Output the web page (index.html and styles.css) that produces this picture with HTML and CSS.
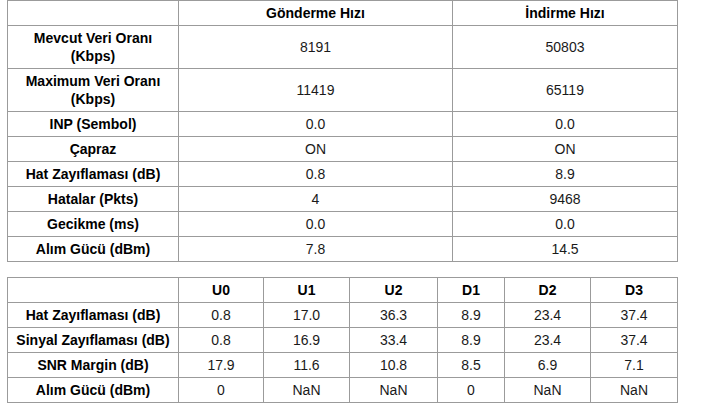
FILE: index.html
```html
<!DOCTYPE html>
<html lang="tr">
<head>
<meta charset="utf-8">
<title>DSL</title>
<link rel="stylesheet" href="styles.css">
</head>
<body>
<div class="page">
<table class="grid rates">
  <colgroup>
    <col class="c-label"><col class="c-up"><col class="c-down">
  </colgroup>
  <tr><th></th><th>Gönderme Hızı</th><th>İndirme Hızı</th></tr>
  <tr><th>Mevcut Veri Oranı<br>(Kbps)</th><td>8191</td><td>50803</td></tr>
  <tr><th>Maximum Veri Oranı<br>(Kbps)</th><td>11419</td><td>65119</td></tr>
  <tr><th>INP (Sembol)</th><td>0.0</td><td>0.0</td></tr>
  <tr><th>Çapraz</th><td>ON</td><td>ON</td></tr>
  <tr><th>Hat Zayıflaması (dB)</th><td>0.8</td><td>8.9</td></tr>
  <tr><th>Hatalar (Pkts)</th><td>4</td><td>9468</td></tr>
  <tr><th>Gecikme (ms)</th><td>0.0</td><td>0.0</td></tr>
  <tr><th>Alım Gücü (dBm)</th><td>7.8</td><td>14.5</td></tr>
</table>

<table class="grid bands">
  <colgroup>
    <col class="b-label"><col class="b-u0"><col class="b-u1"><col class="b-u2"><col class="b-d1"><col class="b-d2"><col class="b-d3">
  </colgroup>
  <tr><th></th><th>U0</th><th>U1</th><th>U2</th><th>D1</th><th>D2</th><th>D3</th></tr>
  <tr><th>Hat Zayıflaması (dB)</th><td>0.8</td><td>17.0</td><td>36.3</td><td>8.9</td><td>23.4</td><td>37.4</td></tr>
  <tr><th>Sinyal Zayıflaması (dB)</th><td>0.8</td><td>16.9</td><td>33.4</td><td>8.9</td><td>23.4</td><td>37.4</td></tr>
  <tr><th>SNR Margin (dB)</th><td>17.9</td><td>11.6</td><td>10.8</td><td>8.5</td><td>6.9</td><td>7.1</td></tr>
  <tr><th>Alım Gücü (dBm)</th><td>0</td><td>NaN</td><td>NaN</td><td>0</td><td>NaN</td><td>NaN</td></tr>
</table>
</div>
</body>
</html>
```
FILE: styles.css
```css
html, body {
  margin: 0;
  padding: 0;
  background: #fff;
}
.page {
  padding: 0 0 0 7px;
  font-family: "Liberation Sans", Arial, sans-serif;
  font-size: 14px;
  color: #111;
}
.grid {
  border-collapse: collapse;
  table-layout: fixed;
  width: 671px;
}
.grid th, .grid td {
  border: 1px solid #9b9b9b;
  padding: 3px 2px;
  line-height: 18px;
  text-align: center;
  vertical-align: middle;
}
.grid th {
  font-weight: bold;
  color: #000;
}
.grid td {
  font-weight: normal;
  color: #1a1a1a;
}
.rates {
  margin-bottom: 15px;
}
.c-label { width: 171px; }
.c-up { width: 274px; }
.c-down { width: 225px; }
.b-label { width: 171px; }
.b-u0 { width: 85px; }
.b-u1 { width: 86px; }
.b-u2 { width: 88px; }
.b-d1 { width: 67px; }
.b-d2 { width: 86px; }
.b-d3 { width: 87px; }
```
